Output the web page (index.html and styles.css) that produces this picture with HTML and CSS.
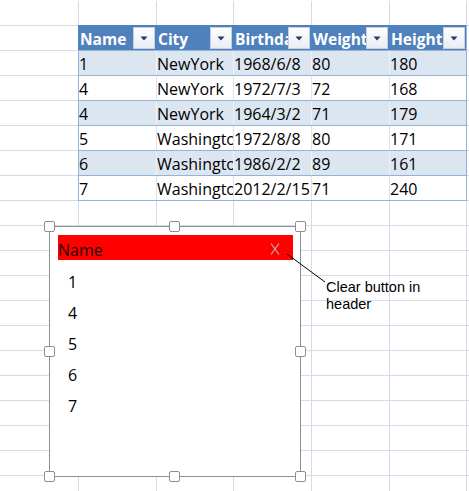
FILE: index.html
```html
<!DOCTYPE html>
<html>
<head>
<meta charset="utf-8">
<link rel="stylesheet" href="styles.css">
</head>
<body>
<div class="sheet">
  <div class="table">
    <div class="row head">
      <div class="cell"><span class="label">Name</span><span class="filter"><svg width="8" height="5" viewBox="0 0 8 5"><path d="M0.5 0.5h7L4 4.5z" fill="#1f3b70"/></svg></span></div>
      <div class="cell"><span class="label">City</span><span class="filter"><svg width="8" height="5" viewBox="0 0 8 5"><path d="M0.5 0.5h7L4 4.5z" fill="#1f3b70"/></svg></span></div>
      <div class="cell"><span class="label">Birthday</span><span class="filter"><svg width="8" height="5" viewBox="0 0 8 5"><path d="M0.5 0.5h7L4 4.5z" fill="#1f3b70"/></svg></span></div>
      <div class="cell"><span class="label">Weight</span><span class="filter"><svg width="8" height="5" viewBox="0 0 8 5"><path d="M0.5 0.5h7L4 4.5z" fill="#1f3b70"/></svg></span></div>
      <div class="cell"><span class="label">Height</span><span class="filter"><svg width="8" height="5" viewBox="0 0 8 5"><path d="M0.5 0.5h7L4 4.5z" fill="#1f3b70"/></svg></span></div>
    </div>
    <div class="row band">
      <div class="cell">1</div><div class="cell">NewYork</div><div class="cell">1968/6/8</div><div class="cell">80</div><div class="cell">180</div>
    </div>
    <div class="row">
      <div class="cell">4</div><div class="cell">NewYork</div><div class="cell">1972/7/3</div><div class="cell">72</div><div class="cell">168</div>
    </div>
    <div class="row band">
      <div class="cell">4</div><div class="cell">NewYork</div><div class="cell">1964/3/2</div><div class="cell">71</div><div class="cell">179</div>
    </div>
    <div class="row">
      <div class="cell">5</div><div class="cell">Washington</div><div class="cell">1972/8/8</div><div class="cell">80</div><div class="cell">171</div>
    </div>
    <div class="row band">
      <div class="cell">6</div><div class="cell">Washington</div><div class="cell">1986/2/2</div><div class="cell">89</div><div class="cell">161</div>
    </div>
    <div class="row">
      <div class="cell">7</div><div class="cell">Washington</div><div class="cell">2012/2/15</div><div class="cell">71</div><div class="cell">240</div>
    </div>
  </div>

  <div class="slicer">
    <div class="slicer-head">
      <span class="slicer-title">Name</span>
      <svg class="clear" width="10" height="12" viewBox="0 0 10 12"><path d="M1 0.5L9 11.5M9 0.5L1 11.5" stroke="#b4b4b4" stroke-width="1.2" fill="none"/></svg>
    </div>
    <ul class="items">
      <li>1</li>
      <li>4</li>
      <li>5</li>
      <li>6</li>
      <li>7</li>
    </ul>
    <span class="handle h-tl"></span>
    <span class="handle h-tc"></span>
    <span class="handle h-tr"></span>
    <span class="handle h-ml"></span>
    <span class="handle h-mr"></span>
    <span class="handle h-bl"></span>
    <span class="handle h-bc"></span>
    <span class="handle h-br"></span>
  </div>

  <svg class="leader" width="44" height="34" viewBox="0 0 44 34"><path d="M2 2L40 30" stroke="#000" stroke-width="1" fill="none"/></svg>
  <div class="callout">Clear button in<br>header</div>
</div>
</body>
</html>
```
FILE: styles.css
```css
html, body {
  margin: 0;
  padding: 0;
  background: #fff;
}

.sheet {
  position: relative;
  width: 469px;
  height: 491px;
  overflow: hidden;
  font-family: "Open Sans", "Liberation Sans", sans-serif;
  font-size: 16px;
  color: #000;
  background:
    linear-gradient(#fff, #fff) 0 0 / 100% 1px no-repeat,
    linear-gradient(#d5dbe8, #d5dbe8) 78px 0 / 1px 100% no-repeat,
    linear-gradient(#d5dbe8, #d5dbe8) 156px 0 / 1px 100% no-repeat,
    linear-gradient(#d5dbe8, #d5dbe8) 233px 0 / 1px 100% no-repeat,
    linear-gradient(#d5dbe8, #d5dbe8) 311px 0 / 1px 100% no-repeat,
    linear-gradient(#d5dbe8, #d5dbe8) 389px 0 / 1px 100% no-repeat,
    linear-gradient(#d5dbe8, #d5dbe8) 466px 0 / 1px 100% no-repeat,
    repeating-linear-gradient(to bottom, #d5dbe8 0 1px, transparent 1px 25px) 0 0 / 100% 100%;
  background-color: #fff;
}

/* ---------- table ---------- */
.table {
  margin: 25px 0 0 78px;
  width: 389px;
  box-sizing: border-box;
  border-right: 1px solid #95b3d7;
  border-bottom: 1px solid #95b3d7;
  background: #fff;
}

.row {
  display: grid;
  grid-template-columns: 78px 77px 78px 78px 77px;
  height: 25px;
  box-sizing: border-box;
  border-top: 1px solid #95b3d7;
}

.row.band {
  background: #dce6f1;
}

.cell {
  box-sizing: border-box;
  height: 24px;
  border-left: 1px solid #dde2ec;
  padding: 2px 0 0 0;
  line-height: 22px;
  white-space: nowrap;
  overflow: hidden;
}

.row.band .cell {
  border-left-color: #eef3f9;
}

.cell:first-child,
.row.band .cell:first-child {
  border-left-color: #95b3d7;
}

.row.head {
  background: #4f81bd;
  border-top-color: #4f81bd;
}

.row.head .cell {
  display: flex;
  align-items: flex-start;
  border-left-color: #4f81bd;
  padding: 0 1px 0 1px;
  color: #fff;
  font-weight: 700;
  font-size: 15.5px;
}

.row.head .cell:first-child {
  border-left-color: #4f81bd;
}

.label {
  flex: 1 1 auto;
  min-width: 0;
  overflow: hidden;
  padding-top: 2px;
  line-height: 22px;
}

.filter {
  flex: none;
  width: 22px;
  height: 22px;
  margin-top: 1px;
  box-sizing: border-box;
  border: 1px solid #c5cfdd;
  background: linear-gradient(#ffffff, #e9ecf1);
  display: flex;
  align-items: center;
  justify-content: center;
}

.filter svg {
  display: block;
}

/* ---------- slicer ---------- */
.slicer {
  position: absolute;
  left: 49px;
  top: 226px;
  width: 252px;
  height: 251px;
  box-sizing: border-box;
  border: 1px solid #8e8e8e;
  background: #fff;
  padding: 8px 0 0 8px;
}

.slicer-head {
  display: flex;
  align-items: flex-start;
  width: 235px;
  height: 25px;
  box-sizing: border-box;
  background: #ff0000;
}

.slicer-title {
  flex: 1 1 auto;
  padding-top: 5px;
  line-height: 20px;
  color: #1a0000;
}

.clear {
  flex: none;
  margin: 8px 13px 0 0;
  display: block;
}

.items {
  list-style: none;
  margin: 7px 0 0 0;
  padding: 0 0 0 10px;
}

.items li {
  line-height: 31px;
  height: 31px;
}

.handle {
  position: absolute;
  width: 11px;
  height: 11px;
  box-sizing: border-box;
  background: #fff;
  border: 1px solid #8e8e8e;
  border-radius: 2px;
}

.h-tl { left: -6px; top: -6px; }
.h-tc { left: calc(50% - 6px); top: -6px; }
.h-tr { right: -6px; top: -6px; }
.h-ml { left: -6px; top: calc(50% - 6px); }
.h-mr { right: -6px; top: calc(50% - 6px); }
.h-bl { left: -6px; bottom: -6px; }
.h-bc { left: calc(50% - 6px); bottom: -6px; }
.h-br { right: -6px; bottom: -6px; }

/* ---------- annotation ---------- */
.leader {
  position: absolute;
  left: 285px;
  top: 252px;
  display: block;
}

.callout {
  position: absolute;
  left: 326px;
  top: 279px;
  font-family: "Liberation Sans", Arial, sans-serif;
  font-size: 14.5px;
  line-height: 17px;
  color: #000;
}
```
